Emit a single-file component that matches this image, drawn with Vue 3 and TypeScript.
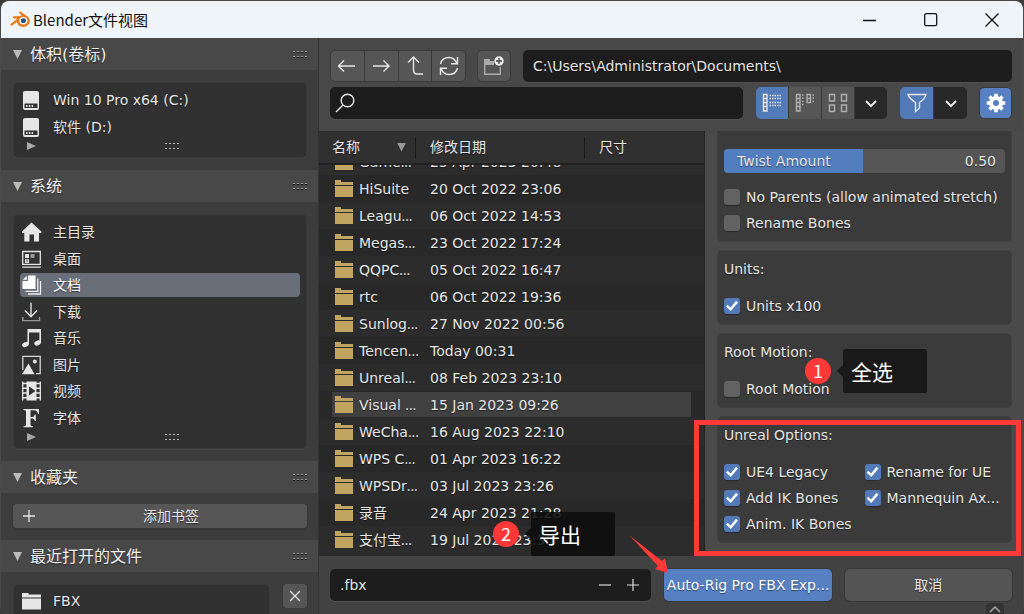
<script setup lang="ts">
import { ref } from 'vue'

interface Place { name: string; icon: string }
interface FileRow { name: string; cut: boolean; date: string }
interface Option { label: string; on: boolean }

const volumes: Place[] = [
  { name: 'Win 10 Pro x64 (C:)', icon: 'disk' },
  { name: '软件 (D:)', icon: 'disk' },
]

const places: Place[] = [
  { name: '主目录', icon: 'home' },
  { name: '桌面', icon: 'desktop' },
  { name: '文档', icon: 'docs' },
  { name: '下载', icon: 'download' },
  { name: '音乐', icon: 'music' },
  { name: '图片', icon: 'image' },
  { name: '视频', icon: 'video' },
  { name: '字体', icon: 'font' },
]
const currentPlace = ref('文档')

const files: FileRow[] = [
  { name: 'Game', cut: true, date: '25 Apr 2023 20:48' },
  { name: 'HiSuite', cut: false, date: '20 Oct 2022 23:06' },
  { name: 'Leagu', cut: true, date: '06 Oct 2022 14:53' },
  { name: 'Megas', cut: true, date: '23 Oct 2022 17:24' },
  { name: 'QQPC', cut: true, date: '05 Oct 2022 16:47' },
  { name: 'rtc', cut: false, date: '06 Oct 2022 19:36' },
  { name: 'Sunlog', cut: true, date: '27 Nov 2022 00:56' },
  { name: 'Tencen', cut: true, date: 'Today 00:31' },
  { name: 'Unreal', cut: true, date: '08 Feb 2023 23:10' },
  { name: 'Visual ', cut: true, date: '15 Jan 2023 09:26' },
  { name: 'WeCha', cut: true, date: '16 Aug 2023 22:10' },
  { name: 'WPS C', cut: true, date: '01 Apr 2023 16:22' },
  { name: 'WPSDr', cut: true, date: '03 Jul 2023 23:26' },
  { name: '录音', cut: false, date: '24 Apr 2023 21:28' },
  { name: '支付宝', cut: true, date: '19 Jul 2023 23:36' },
]
const hovered = ref('Visual ')

const twist = ref(0.5)
const path = ref('C:\\Users\\Administrator\\Documents\\')
const search = ref('')
const fileName = ref('.fbx')

const rigOptions = ref<Option[]>([
  { label: 'No Parents (allow animated stretch)', on: false },
  { label: 'Rename Bones', on: false },
])
const unitOptions = ref<Option[]>([{ label: 'Units x100', on: true }])
const rootOptions = ref<Option[]>([{ label: 'Root Motion', on: false }])
const unrealOptions = ref<Option[]>([
  { label: 'UE4 Legacy', on: true },
  { label: 'Rename for UE', on: true },
  { label: 'Add IK Bones', on: true },
  { label: 'Mannequin Ax...', on: true },
  { label: 'Anim. IK Bones', on: true },
])
</script>

<template>
  <div class="window">
    <header class="titlebar">
      <svg class="logo" viewBox="0 0 20 17" width="20" height="17">
        <path d="M1.6 13.6 L10 7 M4 6.4 H12 M10.2 1.6 L16.500 6.200" fill="none" stroke="#ea7a12" stroke-width="2.2" stroke-linecap="round" />
        <ellipse cx="13.2" cy="10" rx="6.6" ry="6.1" fill="#ea7a12" />
        <ellipse cx="13.3" cy="9.800" rx="4.1" ry="3.7" fill="#fff" />
        <ellipse cx="13.4" cy="9.700" rx="2.6" ry="2.4" fill="#265787" />
      </svg>
      <h1>Blender文件视图</h1>
      <div class="caption">
        <button type="button" aria-label="最小化"><svg width="16" height="16"><path d="M1 8.5H14" /></svg></button>
        <button type="button" aria-label="最大化"><svg width="16" height="16"><rect x="1.7" y="1.7" width="12" height="12" rx="1.5" /></svg></button>
        <button type="button" aria-label="关闭"><svg width="16" height="16"><path d="M1.5 1.5L14.5 14.5M14.5 1.5L1.5 14.5" /></svg></button>
      </div>
    </header>

    <div class="body">
      <aside class="side">
        <section>
          <h2><i class="tri"></i>体积(卷标)<i class="grip"></i></h2>
          <div class="group">
            <div class="box">
              <ul class="two">
                <li v-for="v in volumes" :key="v.name">
                  <button type="button" class="place">
                    <svg width="20" height="20" viewBox="0 0 20 20"><path fill="#e6e6e6" fill-rule="evenodd" d="M3 1H15Q17 1 17 3V18Q17 20 15 20H3Q1 20 1 18V3Q1 1 3 1ZM2.5 13.5V18H15.5V13.5Z" /><path fill="#e6e6e6" d="M4 15h1.5v2H4zM6.8 15h1.5v2H6.8zM9.6 15h1.5v2H9.6z" /></svg>
                    {{ v.name }}
                  </button>
                </li>
              </ul>
              <div class="foot"><i class="tri right"></i><i class="grip light"></i></div>
            </div>
          </div>
        </section>

        <section>
          <h2><i class="tri"></i>系统<i class="grip"></i></h2>
          <div class="group">
            <div class="box">
              <ul class="eight">
                <li v-for="p in places" :key="p.name">
                  <button type="button" class="place" :class="{ active: p.name === currentPlace }" @click="currentPlace = p.name">
                    <svg width="20" height="20" viewBox="0 0 20 20">
                      <path v-if="p.icon === 'home'" fill="#e6e6e6" d="M9.5 .5L19.3 9.6V11H17V19.5H12V12.5H7.5V19.5H2.3V11H0V9.6Z" />
                      <g v-else-if="p.icon === 'desktop'">
                        <path d="M.7 2.5H18.3V15.3H.7ZM.2 18.2H18.8" fill="none" stroke="#e6e6e6" stroke-width="1.3" />
                        <path d="M3 5h4v4H3z" fill="#e6e6e6" /><path d="M8.5 5h4v4h-4z" fill="#999" />
                        <path d="M3.6 10.9H6.4V13.4H3.6Z" fill="none" stroke="#e6e6e6" stroke-width="1.3" />
                      </g>
                      <g v-else-if="p.icon === 'docs'">
                        <path d="M6 .5H13.5V14H.5V6H6Z" fill="#fff" /><path d="M4.8 .8V4.8H.8Z" fill="#fff" />
                        <path d="M15.8 3.5V16.3H3.5M18.5 6V19H6" fill="none" stroke="#f0f0f0" stroke-width="1.3" />
                      </g>
                      <g v-else-if="p.icon === 'download'" fill="none" stroke-width="1.4">
                        <path d="M9 .8V14.5M3 8.5L9 14.7L15 8.5" stroke="#e0e0e0" /><path d="M.8 15V18.6H17.5V15" stroke="#999" />
                      </g>
                      <g v-else-if="p.icon === 'music'">
                        <path d="M5.5 1H19V4.5H7V16H5.5ZM17.4 4H19V14.5H17.4Z" fill="#e6e6e6" />
                        <ellipse cx="3.5" cy="16.5" rx="3.5" ry="2.4" transform="rotate(-20 3.5 16.5)" fill="#e6e6e6" /><ellipse cx="15.6" cy="15" rx="3.4" ry="2.4" transform="rotate(-20 15.6 15)" fill="#e6e6e6" />
                      </g>
                      <g v-else-if="p.icon === 'image'">
                        <path d="M.8 15V1.3H18.2V18.6H14" fill="none" stroke="#d8d8d8" stroke-width="1.3" />
                        <path d="M0 19.3L6.5 8.5L12.5 19.3Z" fill="#e6e6e6" /><circle cx="12.8" cy="6.5" r="2" fill="#e6e6e6" />
                      </g>
                      <g v-else-if="p.icon === 'video'">
                        <path fill="#e6e6e6" fill-rule="evenodd" d="M4.5 .5H14.5V19.5H4.5ZM7 5.5V14.5L13.5 10Z" />
                        <path d="M.7 .5V19.5M18.3 .5V19.5" stroke="#e6e6e6" stroke-width="1.3" />
                        <path d="M0 2.5H5M14 2.5H19M0 7.2H5M14 7.2H19M0 12H5M14 12H19M0 16.8H5M14 16.8H19" stroke="#e6e6e6" stroke-width="1.4" />
                      </g>
                      <path v-else fill="#e6e6e6" d="M1.5 1H17V6H16Q15.3 2.3 12 2.3H8.5V9H10.5Q12.5 9 12.8 6.5H13.8V13H12.8Q12.5 10.4 10.5 10.4H8.5V17Q8.5 18.3 11 18.3V19.3H1.5V18.3Q4 18.3 4 17V3.3Q4 2 1.5 2Z" />
                    </svg>
                    {{ p.name }}
                  </button>
                </li>
              </ul>
              <div class="foot"><i class="tri right"></i><i class="grip light"></i></div>
            </div>
          </div>
        </section>

        <section>
          <h2><i class="tri"></i>收藏夹<i class="grip"></i></h2>
          <div class="group">
            <button type="button" class="add"><svg width="14" height="14"><path d="M7 1V13M1 7H13" stroke="#e6e6e6" stroke-width="1.3" /></svg><span>添加书签</span></button>
          </div>
        </section>

        <section class="recent">
          <h2><i class="tri"></i>最近打开的文件<i class="grip"></i></h2>
          <div class="group split">
            <div class="box">
              <button type="button" class="place">
                <svg width="20" height="20" viewBox="0 0 20 20"><path d="M0 2H6.5V3.5H19V6.5H0ZM0 7.5H19V18.5H0Z" fill="#e6e6e6" /></svg>
                FBX
              </button>
            </div>
            <button type="button" class="clear" aria-label="清除"><svg width="14" height="14"><path d="M2 2L12 12M12 2L2 12" stroke="#e6e6e6" stroke-width="1.3" /></svg></button>
          </div>
        </section>
      </aside>

      <main>
        <div class="tools">
          <div class="bar">
            <div class="seg nav">
              <button type="button" aria-label="后退"><svg width="20" height="20"><path d="M1.5 10H18M7 4.5L1.5 10L7 15.5" /></svg></button>
              <button type="button" aria-label="前进"><svg width="20" height="20"><path d="M2 10H18M12.5 4.5L18 10L12.5 15.5" /></svg></button>
              <button type="button" aria-label="上一级"><svg width="20" height="20"><path d="M3 6.5L8.5 1L14 6.5M8.5 1V14Q8.5 18 12 18H18" /></svg></button>
              <button type="button" aria-label="刷新"><svg width="20" height="20"><path d="M1.5 8Q3 1.5 10 1.5Q15.5 1.5 18 7.5M18.5 1V7.7H12M18.5 12Q17 18.5 10 18.5Q4.5 18.5 2 12.5M1.5 19V12.3H8" /></svg></button>
            </div>
            <button type="button" class="tool" aria-label="新建文件夹"><svg width="22" height="22"><path d="M1.7 6V19.3H17.3V12" stroke="#aaa" /><path d="M1 4H7V6H11V10H1Z" fill="#aaa" stroke="none" /><circle cx="16" cy="6" r="4.7" fill="#eee" stroke="none" /><path d="M16 3V9M13 6H19" stroke="#444" /></svg></button>
            <input v-model="path" class="field path" type="text" aria-label="路径" />
          </div>
          <div class="bar">
            <label class="find field">
              <svg width="20" height="20"><circle cx="12.5" cy="7.5" r="6.3" /><path d="M8 12L1 19" /></svg>
              <input v-model="search" type="text" aria-label="搜索" />
            </label>
            <div class="seg view">
              <button type="button" class="on" aria-label="垂直列表"><svg width="20" height="20"><path d="M1.5 1.5H5V18H1.5ZM1.5 5.5H5M1.5 9.5H5M1.5 13.5H5" /><path d="M7.5 2.5H20M7.5 5.5H20M7.5 9.5H20M7.5 12.5H20" stroke-dasharray="1.5 1" /></svg></button>
              <button type="button" aria-label="水平列表"><svg width="20" height="20" class="dim"><path d="M1.5 1.5H5V18H1.5ZM1.5 5.5H5M1.5 9.5H5M1.5 13.5H5M12 1.5H15.5V9.5H12ZM12 5.5H15.5" /><path d="M7 2H9M7 5H9M7 8.5H9M7 11.5H9M17.5 2H20M17.5 5H20M17.5 8.5H20" stroke-dasharray="1.5 1" /></svg></button>
              <button type="button" aria-label="缩略图"><svg width="20" height="20" class="dim"><path d="M1.5 1.5H6.5V8H1.5ZM13.5 1.5H18.5V8H13.5ZM1.5 12H6.5V18.5H1.5ZM13.5 12H18.5V18.5H13.5Z" /></svg></button>
              <button type="button" class="drop" aria-label="显示设置"><svg width="12" height="12"><path d="M1 4L6 9L11 4" class="bold" /></svg></button>
            </div>
            <div class="seg filter">
              <button type="button" class="on" aria-label="过滤"><svg width="20" height="20"><path d="M1 1.5H19Q18.5 5 12.5 9.5V15L8.5 18.5V9.5Q2 5 1 1.5Z" /></svg></button>
              <button type="button" class="drop" aria-label="过滤设置"><svg width="12" height="12"><path d="M1 4L6 9L11 4" class="bold" /></svg></button>
            </div>
            <button type="button" class="tool gear" aria-label="选项"><svg width="20" height="20" viewBox="-10 -10 20 20"><circle r="5" stroke-width="4" /><path d="M0 -6V-9.3M0 6V9.3M-6 0H-9.3M6 0H9.3M4.3 4.3L6.5 6.5M-4.3 4.3L-6.5 6.5M4.3 -4.3L6.5 -6.5M-4.3 -4.3L-6.5 -6.5" stroke-width="3.6" /></svg></button>
          </div>
        </div>

        <div class="content">
          <div class="files">
            <table>
              <thead>
                <tr><th scope="col">名称<i class="tri"></i></th><th scope="col">修改日期</th><th scope="col">尺寸</th></tr>
              </thead>
              <tbody>
                <tr v-for="f in files" :key="f.name" :class="{ hot: f.name === hovered }">
                  <td><svg width="20" height="18"><path d="M1 0H7V2H19V5H1ZM1 6H19V17H1Z" fill="#c0a45f" /></svg><span>{{ f.name }}<span v-if="f.cut" class="dots">...</span></span></td>
                  <td>{{ f.date }}</td>
                  <td></td>
                </tr>
              </tbody>
            </table>
            <div class="note export"><b>2</b><span>导出</span></div>
          </div>

          <div class="options">
            <div class="card first">
              <label class="slider">
                <i :style="{ width: twist * 99 + '%' }"></i>
                <span>Twist Amount</span><output>{{ twist.toFixed(2) }}</output>
                <input v-model.number="twist" type="range" min="0" max="1" step="0.01" />
              </label>
              <label v-for="o in rigOptions" :key="o.label" class="check"><input v-model="o.on" type="checkbox" />{{ o.label }}</label>
            </div>
            <div class="card">
              <h3>Units:</h3>
              <label v-for="o in unitOptions" :key="o.label" class="check"><input v-model="o.on" type="checkbox" />{{ o.label }}</label>
            </div>
            <div class="card">
              <h3>Root Motion:</h3>
              <label v-for="o in rootOptions" :key="o.label" class="check"><input v-model="o.on" type="checkbox" />{{ o.label }}</label>
            </div>
            <div class="card">
              <h3>Unreal Options:</h3>
              <div class="pair">
                <label v-for="o in unrealOptions" :key="o.label" class="check"><input v-model="o.on" type="checkbox" />{{ o.label }}</label>
              </div>
            </div>
            <div class="note all"><b>1</b><span>全选</span></div>
            <div class="frame"></div>
          </div>
        </div>

        <footer>
          <div class="field name">
            <input v-model="fileName" type="text" aria-label="文件名" />
            <button type="button" aria-label="减少"><svg width="14" height="14"><path d="M1 7H13" /></svg></button>
            <button type="button" aria-label="增加"><svg width="14" height="14"><path d="M1 7H13M7 1V13" /></svg></button>
          </div>
          <div class="actions">
            <button type="button" class="primary">Auto-Rig Pro FBX Exp...</button>
            <button type="button">取消</button>
            <svg class="arrow" width="40" height="40"><path d="M0 0L33 26L36 23.5L39 38L26 34L29 31Z" fill="#ff3838" /></svg>
          </div>
          <div class="tab"><svg width="12" height="8"><path d="M1 7L6 2L11 7" fill="none" stroke="#aaa" stroke-width="1.5" /></svg></div>
        </footer>
      </main>
    </div>
  </div>
</template>

<style>
html, body { margin: 0; background: #3a3a3a; }
</style>

<style scoped>
* { box-sizing: border-box; }
h1, h2, h3, ul { margin: 0; padding: 0; font-weight: 400; list-style: none; }
button, input { font: inherit; color: inherit; text-shadow: inherit; border: 0; padding: 0; background: none; outline: 0; min-width: 0; }
svg { flex: none; }
.window {
  height: 100vh; display: flex; flex-direction: column; overflow: hidden;
  border: 1px solid #4a4a4a; border-bottom: 0; border-radius: 9px 9px 8px 8px; background: #424242; color: #e6e6e6;
  font: 14px/20px "DejaVu Sans", "Noto Sans CJK SC", sans-serif; text-shadow: 0 1px 1px rgba(0, 0, 0, .5);
}
.titlebar { flex: none; height: 37px; display: flex; align-items: center; padding-left: 9px; background: #eff4f9; color: #111; text-shadow: none; }
.logo { margin-right: 3px; }
h1 { font: 15px/24px "Noto Sans CJK SC", sans-serif; }
.caption { margin-left: auto; display: flex; padding-right: 1px; }
.caption button { width: 61px; height: 36px; display: grid; place-items: center; }
.caption svg { fill: none; stroke: #111; stroke-width: 1.3; }
.body { flex: 1; min-height: 0; display: flex; }

.side { flex: none; width: 318px; overflow: hidden; background: #3d3d3d; border-right: 1px solid #333; }
h2 { height: 32px; display: flex; align-items: center; padding: 1px 10px 0 12px; background: #484848; font-size: 16px; color: #f0f0f0; }
.tri { width: 9px; height: 9px; background: #bbb; clip-path: polygon(0 0, 100% 0, 50% 100%); flex: none; }
h2 .tri { margin-right: 8px; }
.tri.right { clip-path: polygon(0 0, 100% 50%, 0 100%); background: #aaa; }
.grip { width: 15px; height: 7px; flex: none; -webkit-mask: repeating-linear-gradient(90deg, #000 0 2px, transparent 2px 4px); mask: repeating-linear-gradient(90deg, #000 0 2px, transparent 2px 4px); }
h2 .grip { margin-left: auto; background: linear-gradient(#a0a0a0 1px, #111 1px, #111 2px, transparent 2px) 0 0 / 4px 5px; }
.grip.light { background: linear-gradient(#bbb 1px, transparent 1px) 0 0 / 4px 5px; }
.group { padding: 12px 11px 12px 12px; }
.box { background: #313131; border: 1px solid #393939; border-radius: 5px; padding: 4px 6px 0; box-shadow: 0 1px 0 #444; }
.box ul { display: grid; grid-auto-rows: 1fr; align-items: center; }
.two { height: 53px; }
.eight { height: 212px; }
.place { width: 100%; height: 24px; display: flex; align-items: center; gap: 11px; padding-left: 2px; border-radius: 4px; text-align: left; white-space: nowrap; }
.place.active { background: #696e78; color: #fff; }
.foot { height: 17px; display: flex; align-items: center; padding: 0 0 5px 7px; }
.foot .tri { height: 8px; margin-right: 8px; }
.foot .grip { margin: 0 auto; }
.add { width: 100%; height: 24px; display: flex; align-items: center; padding: 0 9px; border-radius: 4px; background: #565656; box-shadow: 0 0 0 1px #3a3a3a, 0 2px 1px #353535; }
.add span { flex: 1; text-align: center; padding-left: 8px; }
section:nth-child(3) .group { padding-top: 11px; }
.split { display: flex; align-items: flex-start; gap: 13px; }
.split .box { flex: 1; height: 60px; }
.clear { width: 24px; height: 24px; display: grid; place-items: center; border-radius: 4px; background: #565656; box-shadow: 0 0 0 1px #3a3a3a; }

main { flex: 1; min-width: 0; display: flex; flex-direction: column; background: #484848; }
.tools { padding: 12px 11px 12px; display: grid; gap: 5px; }
.bar { display: flex; height: 32px; }
.seg { display: flex; gap: 1px; border-radius: 5px; overflow: hidden; background: #3a3a3a; }
.seg button, .tool { flex: 1; display: grid; place-items: center; background: #565656; }
.nav { width: 136px; margin-right: 11px; border: 1px solid #3a3a3a; }
.tool { flex: none; width: 34px; border: 1px solid #3a3a3a; border-radius: 5px; }
.bar svg { fill: none; stroke: #e6e6e6; stroke-width: 1.4; }
.bar svg.dim { stroke: #b0b0b0; }
.bar .bold { stroke-width: 2; }
.field { background: #1d1d1d; border-radius: 5px; box-shadow: 0 1px 0 #505050; }
.path { flex: 1; margin-left: 12px; padding: 0 10px; }
.find { flex: 1; display: flex; align-items: center; padding: 0 6px 0 5px; margin-right: 13px; }
.find input { flex: 1; }
.view { width: 131px; margin-right: 13px; }
.filter { width: 67px; margin-right: 12px; }
.seg .on { background: #527ab8; }
.seg .drop { background: #282828; }
.tool.gear { width: 33px; background: #5680c2; }
.gear svg { stroke: #fff; }

.content { flex: 1; min-height: 0; display: grid; grid-template-columns: minmax(0, 386fr) minmax(0, 318fr); grid-template-rows: minmax(0, 1fr); }
.files { position: relative; background: #2b2b2b; border-right: 1px solid #222; }
table { display: flex; flex-direction: column; height: 100%; }
tr { display: grid; grid-template-columns: 111px 169px 1fr; align-items: center; }
thead { flex: none; background: #303030; border-bottom: 2px solid #222; }
thead tr { height: 32px; }
th { font-weight: 400; text-align: left; padding: 0; display: flex; align-items: center; height: 19px; }
th:first-child { padding-left: 13px; }
th .tri { margin-left: auto; margin-right: 24px; background: #999; }
th + th { position: relative; }
th + th::before { content: ""; position: absolute; left: -15px; top: 0; width: 1px; height: 20px; background: #1a1a1a; }
tbody { flex: 1; min-height: 0; overflow: hidden; display: flex; flex-direction: column; justify-content: flex-end; padding-bottom: 3px; }
tbody tr { flex: none; height: 27px; background: #2c2c2c; }
tbody tr:nth-child(even) { background: #282828; }
tbody tr.hot { background: #404040; border: solid #282828; border-width: 1px 0; box-shadow: inset 13px 0 #282828, inset -13px 0 #282828; }
td { padding: 0; display: flex; align-items: center; white-space: pre; }
td:first-child { padding-left: 15px; gap: 5px; }
.dots { font-family: "Open Sans", sans-serif; }

.options { position: relative; display: flex; flex-direction: column; gap: 8px; padding: 0 11px 0 12px; background: #4a4a4a; }
.card { background: #3b3b3b; border: 1px solid #404040; border-radius: 5px; padding: 5px 6px; }
.card.first { padding-top: 18px; border-top: 0; border-radius: 0 0 5px 5px; }
h3 { font-size: 14px; line-height: 26px; margin-bottom: 11px; }
.check { display: flex; align-items: center; gap: 6px; height: 26px; white-space: nowrap; }
.check input { appearance: none; margin: 0; width: 16px; height: 16px; flex: none; border-radius: 3px; background: #626262; box-shadow: 0 1px 1px #2a2a2a; }
.check input:checked { background: #527ab8; }
.check input:checked::before { content: ""; display: block; width: 12px; height: 12px; margin: 2px; background: #fff; clip-path: polygon(0 54%, 14% 40%, 38% 62%, 84% 6%, 100% 20%, 40% 92%); }
.pair { display: grid; grid-template-columns: 1fr 1fr; }
.slider { position: relative; display: flex; align-items: center; justify-content: space-between; height: 24px; margin-bottom: 11px; padding: 0 9px 0 13px; border-radius: 4px; overflow: hidden; background: #555; }
.slider i { position: absolute; inset: 0 auto 0 0; background: #527ebf; }
.slider span, .slider output { position: relative; }
.slider input { position: absolute; inset: 0; width: 100%; margin: 0; opacity: 0; }

.note { position: absolute; display: flex; align-items: center; gap: 12px; font-family: "Noto Sans CJK SC", sans-serif; text-shadow: none; color: #fff; z-index: 2; }
.note b { width: 26px; height: 26px; border-radius: 50%; background: #ff3838; font-weight: 400; font-size: 18px; line-height: 24px; text-align: center; }
.note span { position: relative; width: 84px; height: 44px; padding-left: 8px; border-radius: 2px; background: #191919; font-size: 21px; line-height: 44px; }
.note span::before { content: ""; position: absolute; right: 100%; top: 16px; border: 6px solid transparent; border-left: 0; border-right-color: #191919; }
.note.all { left: 100px; top: 218px; }
.note.export { left: 174px; bottom: 0; }
.export span { background: rgba(13, 13, 13, .87); }
.export span::before { border-right-color: rgba(13, 13, 13, .87); }
.frame { position: absolute; left: -11px; right: 2px; top: 289px; bottom: 0; border: 5px solid #ff3838; z-index: 2; pointer-events: none; }

footer { flex: none; position: relative; display: grid; grid-template-columns: minmax(0, 321fr) minmax(0, 347fr); gap: 13px; padding: 13px 11px; background: #424242; }
.name { display: flex; align-items: center; padding: 0 4px 0 10px; }
.name input { flex: 1; }
.name button { width: 28px; height: 24px; display: grid; place-items: center; }
.name svg { stroke: #ddd; stroke-width: 1.2; }
.actions { position: relative; display: grid; grid-template-columns: minmax(0, 1fr) minmax(0, 1fr); gap: 13px; }
.actions button { height: 32px; border-radius: 5px; background: #545454; box-shadow: 0 0 0 1px #383838; white-space: nowrap; }
.actions .primary { background: #5680c2; color: #fff; }
.arrow { position: absolute; left: -35px; top: -34px; z-index: 3; pointer-events: none; }
.tab { position: absolute; right: 19px; bottom: 0; width: 18px; height: 11px; display: grid; place-items: center; background: #333; border-radius: 4px 4px 0 0; }
</style>
